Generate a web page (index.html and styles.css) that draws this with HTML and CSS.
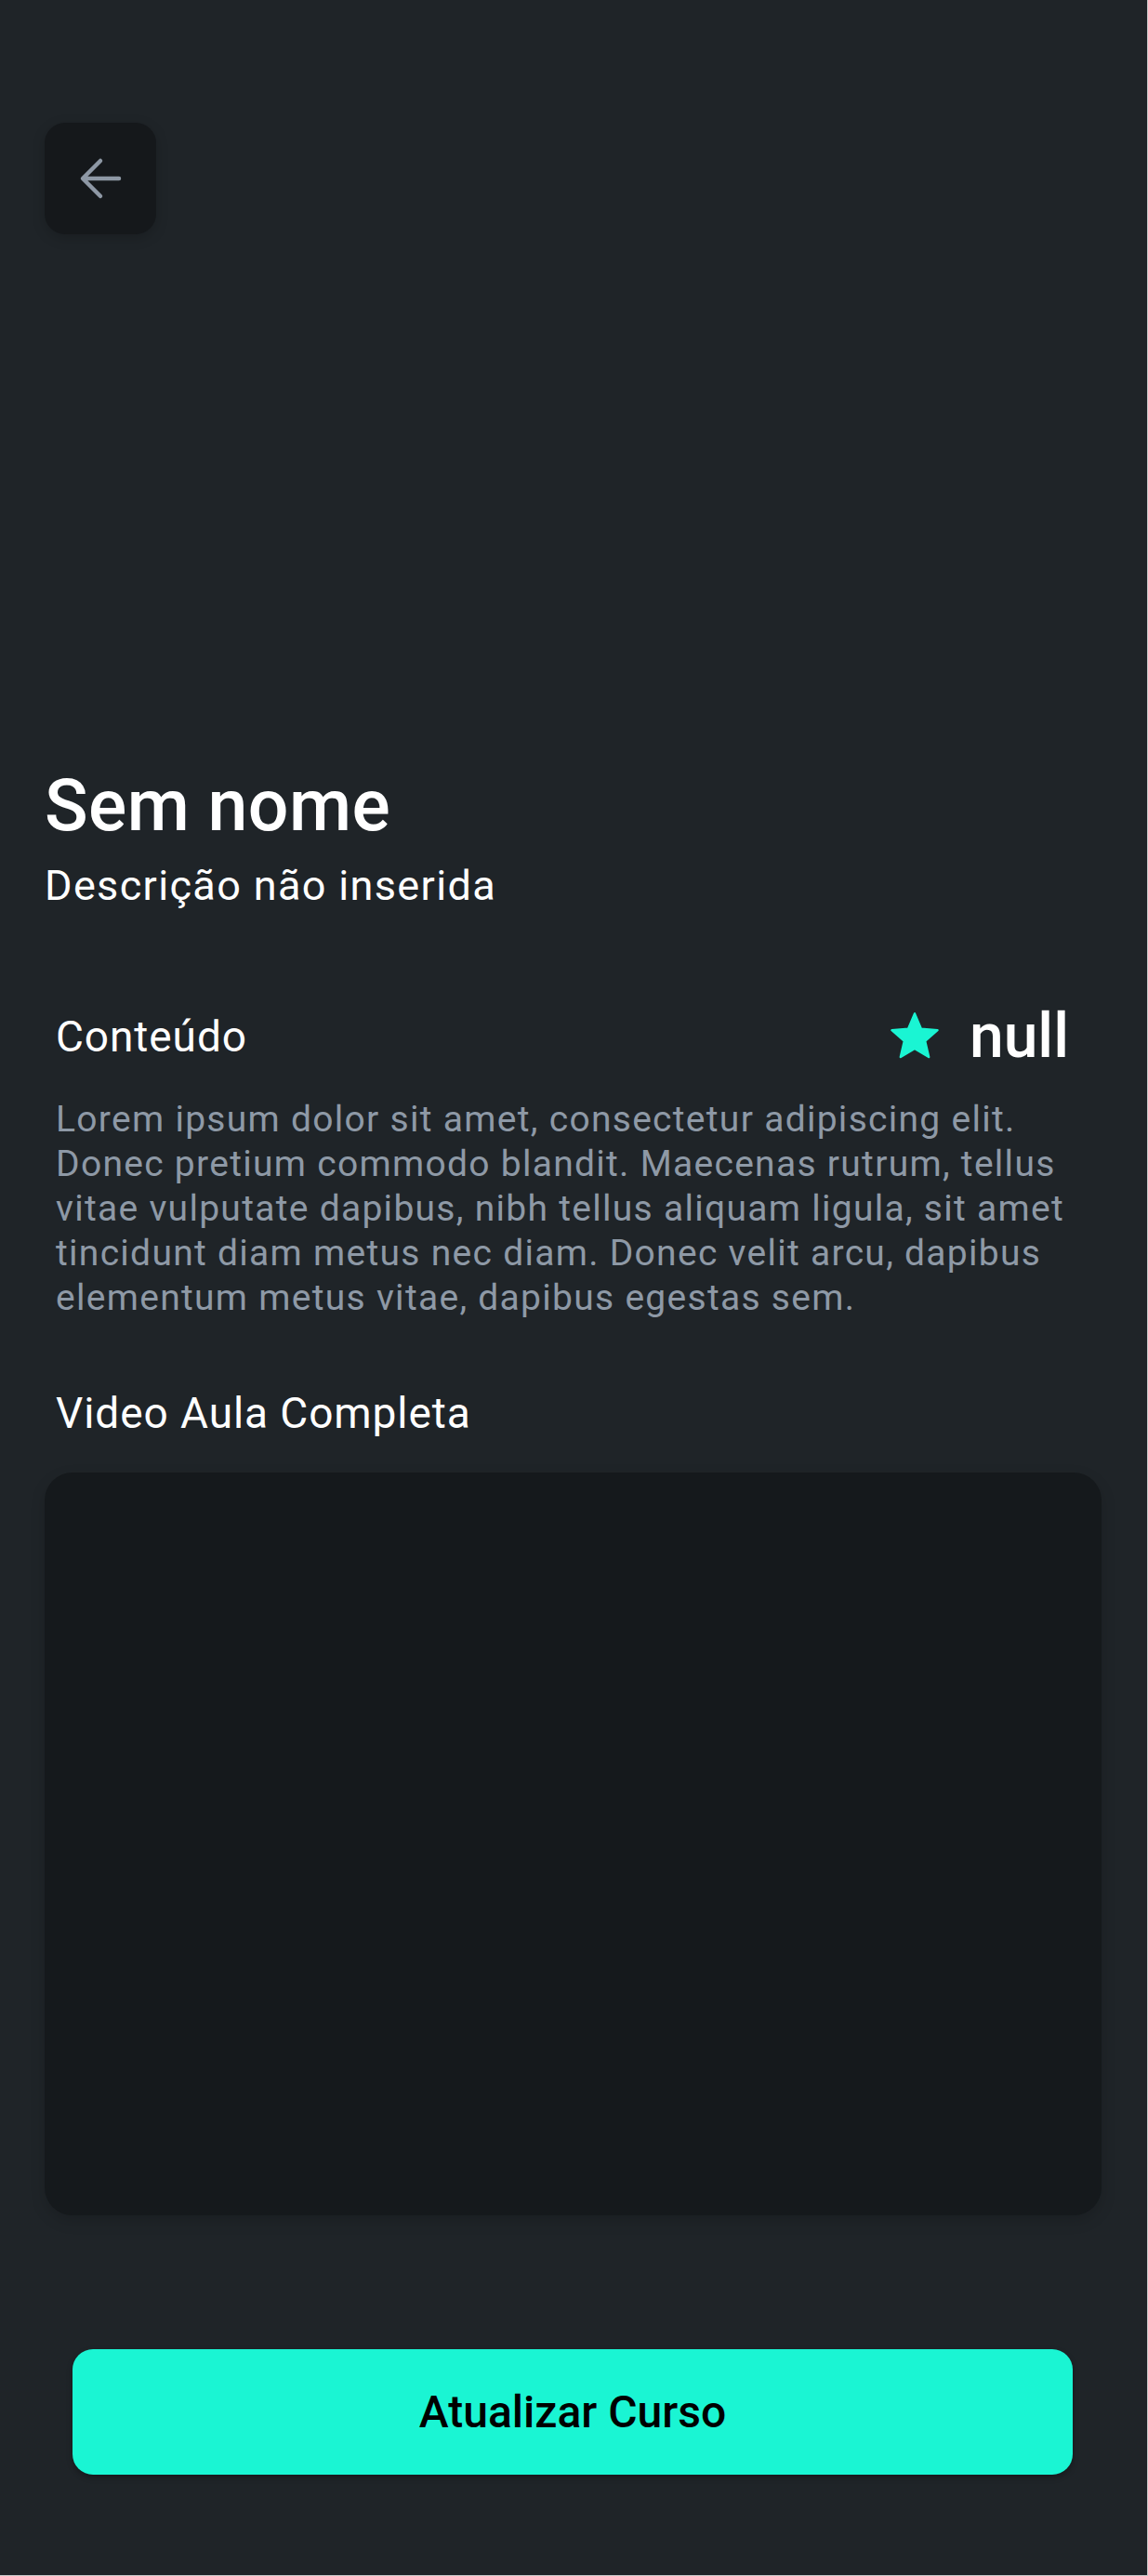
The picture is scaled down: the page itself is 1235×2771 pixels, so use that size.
FILE: index.html
```html
<!DOCTYPE html>
<html lang="pt">
<head>
<meta charset="utf-8">
<title>Curso</title>
<link rel="stylesheet" href="styles.css">
</head>
<body>
<div class="screen">
  <button class="back-btn" aria-label="Voltar">
    <svg width="120" height="120" viewBox="0 0 120 120" fill="none">
      <path d="M80 60H42M60 41L41 60L60 79" stroke="#8e98a5" stroke-width="4.5" stroke-linecap="round" stroke-linejoin="round"/>
    </svg>
  </button>

  <header class="hero">
    <h1 class="title">Sem nome</h1>
    <p class="desc">Descrição não inserida</p>
  </header>

  <section class="content">
    <div class="content-head">
      <h2 class="section-label">Conteúdo</h2>
      <div class="rating">
        <svg class="star" width="62" height="62" viewBox="0 0 24 24">
          <path d="M12 17.27L18.18 21l-1.64-7.03L22 9.24l-7.19-.61L12 2 9.19 8.63 2 9.24l5.46 4.73L5.82 21z" fill="#1af5d3" stroke="#1af5d3" stroke-width="1" stroke-linejoin="round" transform="translate(12 11.5) scale(0.95) translate(-12 -11.5)"/>
        </svg>
        <span class="rating-value">null</span>
      </div>
    </div>
    <p class="lorem">Lorem ipsum dolor sit amet, consectetur adipiscing elit. Donec pretium commodo blandit. Maecenas rutrum, tellus vitae vulputate dapibus, nibh tellus aliquam ligula, sit amet tincidunt diam metus nec diam. Donec velit arcu, dapibus elementum metus vitae, dapibus egestas sem.</p>
    <h2 class="section-label video-label">Video Aula Completa</h2>
  </section>

  <div class="video"></div>

  <button class="cta">Atualizar Curso</button>
</div>
</body>
</html>
```

FILE: styles.css
```css
html, body {
  margin: 0;
  padding: 0;
  background: #1f2428;
}

.screen {
  box-sizing: border-box;
  width: 1235px;
  height: 2771px;
  padding: 132px 49px 0 48px;
  display: flex;
  flex-direction: column;
  align-items: stretch;
  background: #1f2428;
  border-right: 1px solid #c9c9c9;
  border-bottom: 1px solid #c9c9c9;
  font-family: Roboto, "Noto Sans", sans-serif;
  color: #ffffff;
}

.back-btn {
  width: 120px;
  height: 120px;
  padding: 0;
  border: none;
  border-radius: 22px;
  background: #15181b;
  box-shadow: 0 4px 14px rgba(0, 0, 0, 0.18);
  display: flex;
  align-items: center;
  justify-content: center;
  align-self: flex-start;
}

.back-btn svg {
  display: block;
}

.hero {
  margin-top: 570px;
}

.title {
  margin: 0;
  font-size: 77px;
  line-height: 90px;
  font-weight: 500;
  letter-spacing: 0.005em;
}

.desc {
  margin: 15px 0 0;
  font-size: 45px;
  line-height: 52px;
  font-weight: 400;
  letter-spacing: 0.03em;
}

.content {
  margin-top: 101px;
  padding: 0 12px;
}

.content-head {
  display: flex;
  align-items: center;
  justify-content: space-between;
  height: 70px;
}

.section-label {
  margin: 0;
  font-size: 46px;
  line-height: 54px;
  font-weight: 400;
  letter-spacing: 0.02em;
}

.rating {
  display: flex;
  align-items: center;
  gap: 28px;
  margin-right: 23px;
}

.star {
  display: block;
}

.rating-value {
  font-size: 66px;
  line-height: 70px;
  font-weight: 500;
}

.lorem {
  margin: 30px 0 0;
  font-size: 39px;
  line-height: 48px;
  letter-spacing: 0.033em;
  color: #8e99a6;
}

.video-label {
  margin-top: 73px;
}

.video {
  margin-top: 37px;
  height: 799px;
  border-radius: 30px;
  background: #15191c;
  box-shadow: 0 6px 16px rgba(0, 0, 0, 0.15);
}

.cta {
  margin: 144px 31px 0 30px;
  height: 135px;
  border: none;
  border-radius: 22px;
  background: #1af5d3;
  box-shadow: 0 3px 6px rgba(0, 0, 0, 0.3);
  font-family: Roboto, "Noto Sans", sans-serif;
  font-size: 48px;
  font-weight: 500;
  color: #000000;
}
```
